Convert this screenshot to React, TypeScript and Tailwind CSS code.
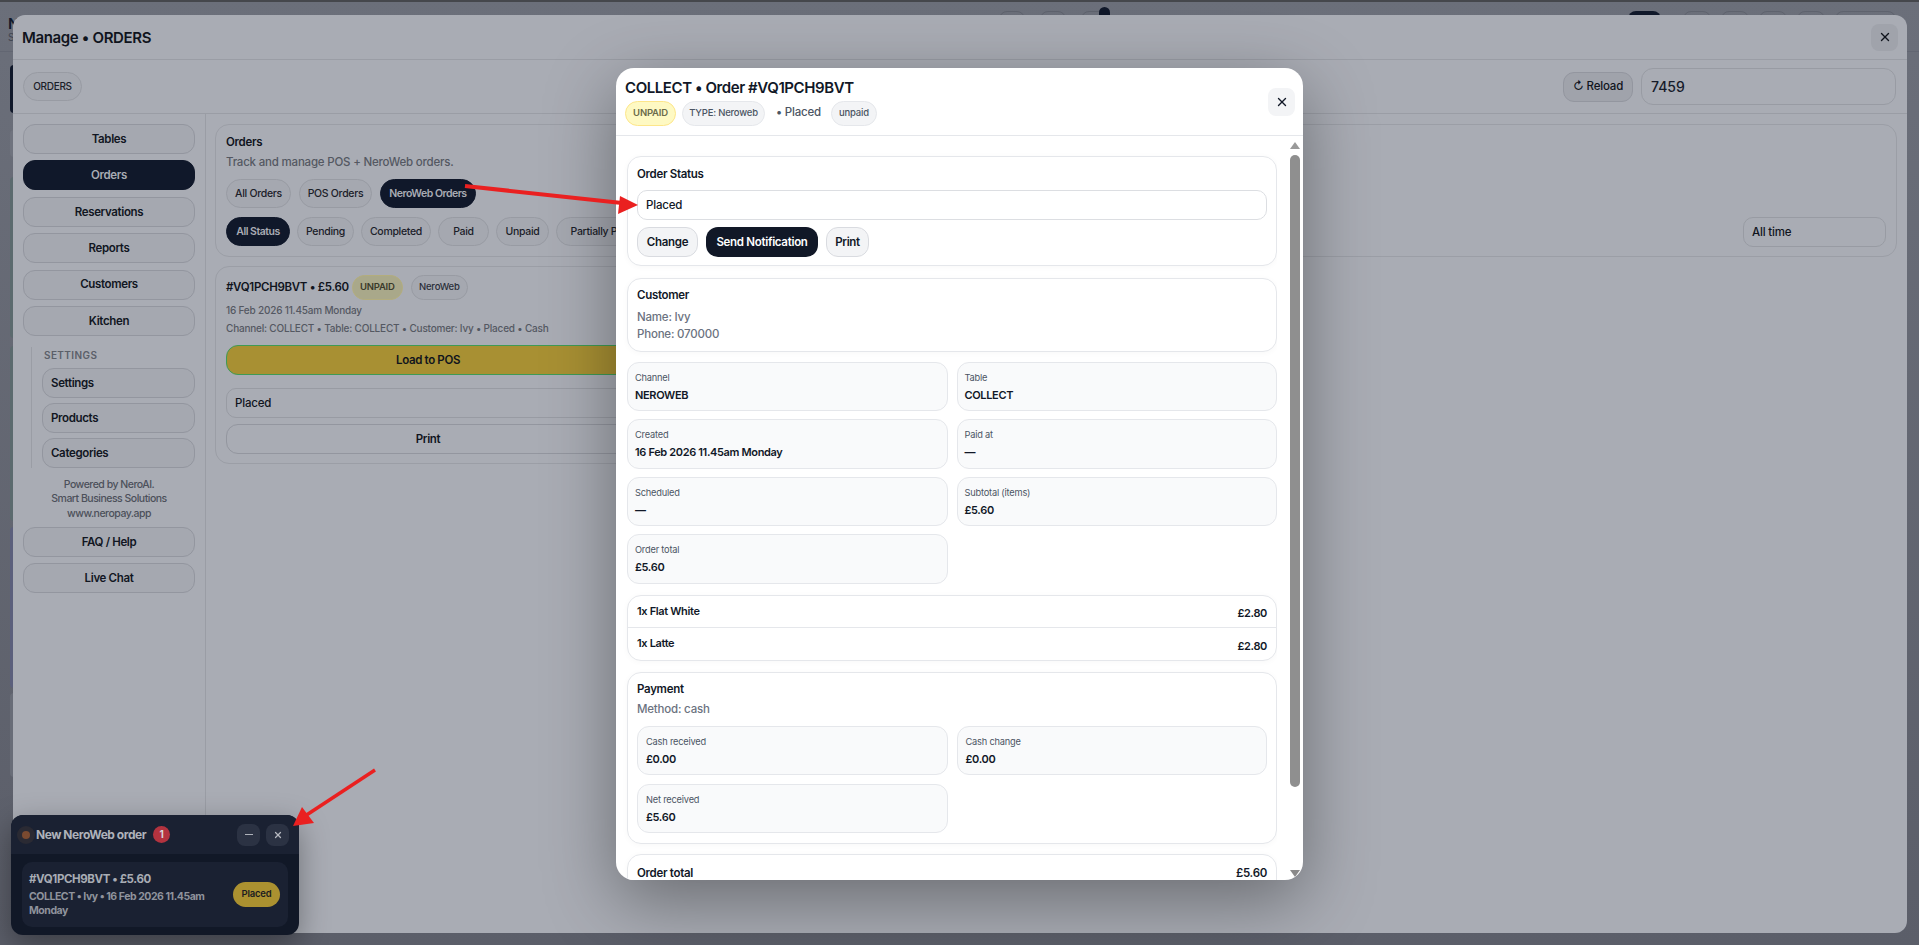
import { X } from "lucide-react";
import { clsx } from "clsx";

const NAV_ITEMS = ["Tables", "Orders", "Reservations", "Reports", "Customers", "Kitchen"];
const SETTINGS_ITEMS = ["Settings", "Products", "Categories"];
const STATUS_CHIPS = ["All Status", "Pending", "Completed", "Paid", "Unpaid", "Partially Paid"];

const DETAILS = [
    { label: "Channel", value: "NEROWEB" },
    { label: "Table", value: "COLLECT" },
    { label: "Created", value: "16 Feb 2026 11.45am Monday" },
    { label: "Paid at", value: "—" },
    { label: "Scheduled", value: "—" },
    { label: "Subtotal (items)", value: "£5.60" },
    { label: "Order total", value: "£5.60" },
];

const PAYMENT_DETAILS = [
    { label: "Cash received", value: "£0.00" },
    { label: "Cash change", value: "£0.00" },
    { label: "Net received", value: "£5.60" },
];

function Chip({ label, active, className }: { label: string; active?: boolean; className?: string }) {
    return (
        <div
            className={clsx(
                "flex h-[29px] shrink-0 items-center justify-center rounded-full border text-[10.5px]",
                active ? "border-[#10182a] bg-[#10182a] font-semibold tracking-[-0.5px] text-[#a9acb4]" : "border-[#989ba3] bg-[#a5a8b0] font-medium tracking-[-0.3px] text-[#1b2029]",
                className,
            )}
        >
            {label}
        </div>
    );
}

function SideButton({ label, active, left }: { label: string; active?: boolean; left?: boolean }) {
    return (
        <div
            className={clsx(
                "flex h-[30px] w-full items-center rounded-[12px] border pt-[1px] text-[11.5px] font-semibold tracking-[-0.35px]",
                left ? "justify-start pl-[8px]" : "justify-center",
                active ? "border-[#10182a] bg-[#10182a] text-[#a9acb4]" : "border-[#93969f] bg-[#a5a8b0] text-[#111622]",
            )}
        >
            {label}
        </div>
    );
}

function Backdrop() {
    return (
        <div className="absolute inset-0 bg-gradient-to-b from-[#6b6f7a] to-[#5b5e69]">
            <div className="h-[2px] bg-[#45474c]" />
            <div className="flex h-[50px] border-b border-[#626672] pl-[8px]">
                <div className="pt-[15px] text-[15px] leading-[14px] font-semibold text-[#10182a]">
                    N
                    <div className="text-[10px] leading-[12px] font-normal text-[#3f444f]">S</div>
                </div>
                <div className="ml-[980px] flex gap-[15px] pt-[9px]">
                    <div className="h-[20px] w-[26px] rounded-[8px] border border-[#5e626d]" />
                    <div className="h-[20px] w-[26px] rounded-[8px] border border-[#5e626d]" />
                    <div className="relative h-[20px] w-[30px] rounded-[8px] border border-[#5e626d]">
                        <div className="absolute -top-[5px] right-0 h-[14px] w-[11px] rounded-full bg-[#10182a]" />
                    </div>
                </div>
                <div className="ml-[517px] flex gap-[10px] pt-[9px]">
                    <div className="h-[20px] w-[33px] rounded-[8px] bg-[#10182a]" />
                    <div className="ml-[12px] h-[20px] w-[28px] rounded-[8px] border border-[#5e626d]" />
                    <div className="h-[20px] w-[28px] rounded-[8px] border border-[#5e626d]" />
                    <div className="h-[20px] w-[28px] rounded-[8px] border border-[#5e626d]" />
                    <div className="h-[20px] w-[28px] rounded-[8px] border border-[#5e626d]" />
                    <div className="h-[20px] w-[61px] rounded-[8px] border border-[#5e626d]" />
                </div>
            </div>
            <div className="flex w-[14px] flex-col pl-[10px] pt-[13px]">
                <div className="h-[48px] rounded-l-[8px] bg-[#10182a]" />
                <div className="mt-[17px] h-[27px] rounded-l-[8px] bg-[#6f737e]" />
                <div className="mt-[20px] h-[161px] rounded-l-[8px] bg-[#5b6a6e]" />
                <div className="mt-[8px] h-[175px] rounded-l-[8px] bg-[#5b6a6e]" />
                <div className="mt-[6px] h-[161px] rounded-l-[8px] bg-[#5b5f7c]" />
                <div className="mt-[5px] h-[84px] rounded-l-[8px] bg-[#696d78]" />
            </div>
        </div>
    );
}

function ManagePanel() {
    return (
        <div className="relative flex h-[918px] w-[1894px] flex-col overflow-hidden rounded-[12px] bg-[#a9acb4] text-[#10141d]">
            <div className="flex h-[45px] shrink-0 items-center justify-between border-b border-[#9a9da5] pl-[9px] pr-[9px]">
                <div className="pt-[2px] text-[15px] font-semibold tracking-[-0.35px]">Manage • ORDERS</div>
                <div className="flex h-[27px] w-[27px] items-center justify-center rounded-[8px] bg-[#a0a3ab]">
                    <X size={14} strokeWidth={2.4} />
                </div>
            </div>
            <div className="flex h-[54px] shrink-0 items-center justify-between border-b border-[#9a9da5] pl-[10px] pr-[11px]">
                <Chip label="ORDERS" className="w-[59px] text-[10px]" />
                <div className="flex items-center gap-[8px]">
                    <div className="flex h-[30px] w-[70px] items-center justify-center rounded-[11px] border border-[#93969f] bg-[#a0a3ab] text-[11.5px] font-medium tracking-[-0.2px]">
                        ↻ Reload
                    </div>
                    <div className="flex h-[37px] w-[255px] items-center rounded-[12px] border border-[#989ba3] pl-[9px] text-[14px] font-medium text-[#161b2a]">
                        7459
                    </div>
                </div>
            </div>
            <div className="flex min-h-0 flex-1">
                <div className="w-[193px] shrink-0 border-r border-[#9a9da5] px-[10px] pt-[10px]">
                    <div className="flex flex-col gap-[6.4px]">
                        {NAV_ITEMS.map((item) => (
                            <SideButton key={item} label={item} active={item === "Orders"} />
                        ))}
                    </div>
                    <div className="ml-[8px] mt-[11px] h-[121px] border-l border-[#9a9da5] pl-[10px]">
                        <div className="pl-[2px] pt-[1px] text-[10px] leading-[14px] font-semibold tracking-[0.4px] text-[#5b5f69]">SETTINGS</div>
                        <div className="mt-[6px] flex flex-col gap-[5px]">
                            {SETTINGS_ITEMS.map((item) => (
                                <SideButton key={item} label={item} left />
                            ))}
                        </div>
                    </div>
                    <div className="mt-[10px] text-center text-[10.5px] leading-[14.5px] font-medium tracking-[-0.5px] text-[#4c505a]">
                        <div>Powered by NeroAI.</div>
                        <div>Smart Business Solutions</div>
                        <div>www.neropay.app</div>
                    </div>
                    <div className="mt-[6px] flex flex-col gap-[6px]">
                        <SideButton label="FAQ / Help" />
                        <SideButton label="Live Chat" />
                    </div>
                </div>
                <div className="min-w-0 flex-1 pl-[9px] pr-[10px] pt-[10px]">
                    <div className="h-[133px] rounded-[14px] border border-[#9b9ea6] px-[10px] pt-[9px]">
                        <div className="text-[11.5px] leading-[16px] font-semibold tracking-[-0.3px]">Orders</div>
                        <div className="mt-[4px] text-[11.5px] leading-[16px] font-medium tracking-[-0.2px] text-[#545862]">Track and manage POS + NeroWeb orders.</div>
                        <div className="mt-[9px] flex gap-[8px]">
                            <Chip label="All Orders" className="w-[65px]" />
                            <Chip label="POS Orders" className="w-[73px]" />
                            <Chip label="NeroWeb Orders" active className="w-[96px]" />
                        </div>
                        <div className="mt-[9px] flex justify-between">
                            <div className="flex gap-[7px]">
                                <Chip label={STATUS_CHIPS[0]} active className="w-[64px]" />
                                <Chip label={STATUS_CHIPS[1]} className="w-[57px]" />
                                <Chip label={STATUS_CHIPS[2]} className="w-[70px]" />
                                <Chip label={STATUS_CHIPS[3]} className="w-[51px]" />
                                <Chip label={STATUS_CHIPS[4]} className="w-[53px]" />
                                <Chip label={STATUS_CHIPS[5]} className="w-[90px]" />
                            </div>
                            <div className="flex h-[30px] w-[143px] items-center rounded-[10px] border border-[#989ba3] pl-[8px] pt-[1px] text-[11.5px] font-medium tracking-[-0.2px]">All time</div>
                        </div>
                    </div>
                    <div className="mt-[9px] h-[198px] w-[426px] rounded-[14px] border border-[#9b9ea6] px-[10px] pt-[8px]">
                        <div className="flex h-[25px] items-center">
                            <div className="text-[11.5px] font-semibold tracking-[-0.3px]">#VQ1PCH9BVT • £5.60</div>
                            <div className="ml-[3px] flex h-[25px] w-[51px] items-center justify-center rounded-full border border-[#b3ad7d] bg-[#a9a88a] text-[9.5px] font-semibold tracking-[-0.2px] text-[#3a3a2a]">UNPAID</div>
                            <div className="ml-[8px] flex h-[25px] w-[57px] items-center justify-center rounded-full border border-[#989ba3] bg-[#a5a8b0] text-[9.5px] font-medium tracking-[-0.2px] text-[#2a2e38]">NeroWeb</div>
                        </div>
                        <div className="mt-[2px] text-[10px] leading-[16px] font-medium tracking-[-0.2px] text-[#545862]">16 Feb 2026 11.45am Monday</div>
                        <div className="mt-[2px] text-[10px] leading-[16px] font-medium tracking-[-0.2px] text-[#545862]">Channel: COLLECT • Table: COLLECT • Customer: Ivy • Placed • Cash</div>
                        <div className="mt-[9px] flex h-[30px] items-center justify-center rounded-[12px] border border-[#3f9a55] bg-[#a89033] pt-[1px] text-[11.5px] font-semibold tracking-[-0.35px]">Load to POS</div>
                        <div className="mt-[13px] flex h-[30px] items-center rounded-[10px] border border-[#989ba3] pl-[8px] pt-[1px] text-[11.5px] font-medium tracking-[-0.2px]">Placed</div>
                        <div className="mt-[6px] flex h-[30px] items-center justify-center rounded-[12px] border border-[#93969f] pt-[1px] text-[11.5px] font-semibold tracking-[-0.3px]">Print</div>
                    </div>
                </div>
            </div>
        </div>
    );
}

function DetailCell({ label, value, inset }: { label: string; value: string; inset?: boolean }) {
    return (
        <div className={clsx("h-[49.5px] rounded-[12px] border border-[#e5e7eb] bg-[#f9fafb] pt-[8px]", inset ? "pl-[8px]" : "pl-[7px]")}>
            <div className="text-[9.25px] leading-[14px] font-normal tracking-[-0.2px] text-[#4b5563]">{label}</div>
            <div className="mt-[2px] text-[11px] leading-[16px] font-semibold tracking-[-0.35px] text-[#111827]">{value}</div>
        </div>
    );
}

function WhiteCard({ className, children }: { className?: string; children: React.ReactNode }) {
    return (
        <div className={clsx("w-[650px] rounded-[14px] border border-[#e5e7eb] bg-white shadow-[0_1px_6px_rgba(0,0,0,0.03)]", className)}>
            {children}
        </div>
    );
}

function OrderModal() {
    return (
        <div className="absolute left-[616px] top-[68px] flex h-[812px] w-[687px] flex-col overflow-hidden rounded-[18px] bg-white text-[#111827] shadow-[0_20px_70px_rgba(0,0,0,0.38)]">
            <div className="flex h-[68px] shrink-0 items-start justify-between border-b border-[#e5e7eb] pl-[9px] pr-[8px]">
                <div>
                    <div className="pt-[11px] text-[15px] leading-[18px] font-semibold tracking-[-0.42px]">COLLECT • Order #VQ1PCH9BVT</div>
                    <div className="mt-[4px] flex h-[25px] items-center text-[9.5px] font-medium tracking-[-0.2px]">
                        <div className="flex h-[25px] w-[51px] items-center justify-center rounded-full border border-[#fde68a] bg-[#fef9c3] font-semibold text-[#6b6b4a]">UNPAID</div>
                        <div className="ml-[6px] flex h-[25px] w-[83px] items-center justify-center rounded-full border border-[#e5e7eb] bg-[#f3f4f6] text-[#4b5563]">TYPE: Neroweb</div>
                        <div className="ml-[11px] -mt-[1px] text-[11.5px] text-[#4b5563]">• Placed</div>
                        <div className="ml-[10px] flex h-[25px] w-[46px] items-center justify-center rounded-full border border-[#e5e7eb] bg-[#f3f4f6] text-[#4b5563]">unpaid</div>
                    </div>
                </div>
                <div className="mt-[20px] flex h-[28px] w-[27px] items-center justify-center rounded-[8px] bg-[#f3f4f6]">
                    <X size={14} strokeWidth={2.4} />
                </div>
            </div>
            <div className="flex min-h-0 flex-1">
                <div className="w-[661px] shrink-0 overflow-hidden pl-[11px] pt-[20px]">
                    <WhiteCard className="h-[110px] px-[9px] pt-[9px]">
                        <div className="text-[11.5px] leading-[16px] font-semibold tracking-[-0.3px]">Order Status</div>
                        <div className="mt-[8px] flex h-[30px] items-center rounded-[10px] border border-[#dcdee2] pl-[8px] pt-[1px] text-[11.5px] font-medium tracking-[-0.2px]">Placed</div>
                        <div className="mt-[7px] flex gap-[8px] text-[11.5px] font-semibold tracking-[-0.3px]">
                            <div className="flex h-[30px] w-[61px] items-center justify-center rounded-[12px] border border-[#d9dbe0] bg-[#f3f4f6] pt-[1px]">Change</div>
                            <div className="flex h-[30px] w-[112px] items-center justify-center rounded-[12px] bg-[#111827] pt-[1px] text-white">Send Notification</div>
                            <div className="flex h-[30px] w-[43px] items-center justify-center rounded-[12px] border border-[#d9dbe0] bg-[#f3f4f6] pt-[1px]">Print</div>
                        </div>
                    </WhiteCard>
                    <WhiteCard className="mt-[12px] h-[74px] px-[9px] pt-[8px]">
                        <div className="text-[11.5px] leading-[16px] font-semibold tracking-[-0.3px]">Customer</div>
                        <div className="mt-[6px] text-[11.5px] leading-[17px] font-medium tracking-[-0.2px] text-[#6b7280]">Name: Ivy</div>
                        <div className="text-[11.5px] leading-[17px] font-medium tracking-[-0.2px] text-[#6b7280]">Phone: 070000</div>
                    </WhiteCard>
                    <div className="mt-[9.5px] grid w-[650px] grid-cols-2 gap-x-[9px] gap-y-[8px]">
                        {DETAILS.map((cell) => (
                            <DetailCell key={cell.label} label={cell.label} value={cell.value} />
                        ))}
                    </div>
                    <WhiteCard className="mt-[11px] h-[66px] overflow-hidden">
                        <div className="flex h-[32px] justify-between border-b border-[#e5e7eb] px-[9px] pt-[7px] text-[11px] leading-[16px] font-semibold tracking-[-0.35px]">
                            <span>1x Flat White</span>
                            <span className="pt-[2px]">£2.80</span>
                        </div>
                        <div className="flex justify-between px-[9px] pt-[7px] text-[11px] leading-[16px] font-semibold tracking-[-0.35px]">
                            <span>1x Latte</span>
                            <span className="pt-[3px]">£2.80</span>
                        </div>
                    </WhiteCard>
                    <WhiteCard className="mt-[11px] h-[172px] px-[9px] pt-[8px]">
                        <div className="text-[11.5px] leading-[16px] font-semibold tracking-[-0.3px]">Payment</div>
                        <div className="mt-[4px] text-[11.5px] leading-[16px] font-medium tracking-[-0.2px] text-[#6b7280]">Method: cash</div>
                        <div className="mt-[9px] grid grid-cols-2 gap-x-[9px] gap-y-[8.5px]">
                            {PAYMENT_DETAILS.map((cell) => (
                                <DetailCell key={cell.label} label={cell.label} value={cell.value} inset />
                            ))}
                        </div>
                    </WhiteCard>
                    <WhiteCard className="mt-[10px] h-[60px] px-[9px] pt-[10px]">
                        <div className="flex justify-between text-[11.5px] leading-[16px] font-semibold tracking-[-0.3px]">
                            <span>Order total</span>
                            <span>£5.60</span>
                        </div>
                    </WhiteCard>
                </div>
                <div className="ml-[13px] flex w-[10px] shrink-0 flex-col items-center pt-[6px]">
                    <svg width="10" height="7" viewBox="0 0 10 7"><path d="M5 0 L10 7 L0 7 Z" fill="#9a9a9a" /></svg>
                    <div className="mt-[6px] h-[632px] w-[10px] rounded-full bg-[#8f8f8f]" />
                    <svg className="mt-[83px]" width="10" height="7" viewBox="0 0 10 7"><path d="M0 0 L10 0 L5 7 Z" fill="#8a8a8a" /></svg>
                </div>
            </div>
        </div>
    );
}

function OrderToast() {
    return (
        <div className="absolute left-[11px] top-[815px] w-[288px] overflow-hidden rounded-[12px] bg-[#111827] shadow-[0_10px_30px_rgba(0,0,0,0.35)]">
            <div className="flex h-[39px] items-center bg-[#1a2132] pl-[6px] pr-[10px]">
                <div className="flex h-[18px] w-[18px] items-center justify-center rounded-full bg-[#2a2a33]">
                    <div className="h-[8px] w-[8px] rounded-full bg-[#7a4a30]" />
                </div>
                <div className="ml-[1px] text-[12px] font-bold tracking-[-0.45px] text-[#aeb2ba]">New NeroWeb order</div>
                <div className="ml-[7px] flex h-[17px] w-[17px] items-center justify-center rounded-full bg-[#b3333f] text-[10px] font-bold text-[#d8d8dc]">1</div>
                <div className="ml-auto flex gap-[6px] text-[#b6b9c0]">
                    <div className="flex h-[22px] w-[23px] items-center justify-center rounded-[8px] bg-[#2b3243]">
                        <div className="h-[1.5px] w-[8px] bg-[#aeb2ba]" />
                    </div>
                    <div className="flex h-[22px] w-[23px] items-center justify-center rounded-[8px] bg-[#2b3243]">
                        <X size={10} strokeWidth={3} />
                    </div>
                </div>
            </div>
            <div className="px-[11px] pb-[8px] pt-[8px]">
                <div className="flex h-[65px] items-center justify-between rounded-[10px] bg-[#1a2132] pl-[7px] pr-[8px]">
                    <div className="w-[186px]">
                        <div className="text-[11.5px] leading-[16px] font-bold tracking-[-0.4px] text-[#a8acb4]">#VQ1PCH9BVT • £5.60</div>
                        <div className="mt-[3px] text-[10.5px] leading-[14px] font-bold tracking-[-0.45px] text-[#8f939c]">COLLECT • Ivy • 16 Feb 2026 11.45am Monday</div>
                    </div>
                    <div className="flex h-[25px] w-[47px] items-center justify-center rounded-full bg-[#ab9130] text-[9.5px] font-semibold tracking-[-0.2px] text-[#1b1c20]">Placed</div>
                </div>
            </div>
        </div>
    );
}

function AnnotationArrows() {
    return (
        <svg className="pointer-events-none absolute left-0 top-0" width="1919" height="945" viewBox="0 0 1919 945">
            <path d="M465 186 L622 203" stroke="#ea2020" strokeWidth="4" />
            <path d="M638 205 L618 214 L620 196 Z" fill="#ea2020" />
            <path d="M375 770 L305 816" stroke="#ea2020" strokeWidth="3.5" />
            <path d="M293 826 L302 807 L314 823 Z" fill="#ea2020" />
        </svg>
    );
}

export default function App() {
    return (
        <div className="relative h-[945px] w-full overflow-hidden font-['Inter','Liberation_Sans',sans-serif]">
            <Backdrop />
            <div className="relative pl-[13px] pt-[15px]">
                <ManagePanel />
            </div>
            <OrderModal />
            <OrderToast />
            <AnnotationArrows />
        </div>
    );
}
